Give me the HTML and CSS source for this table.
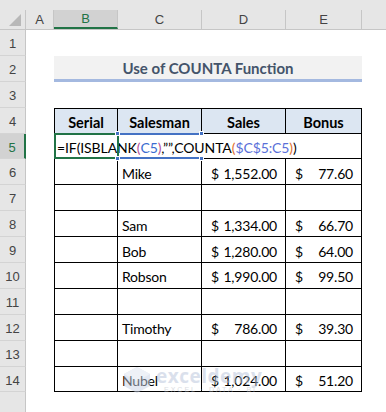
FILE: index.html
```html
<!DOCTYPE html>
<html lang="en">
<head>
    <meta charset="UTF-8">
    <meta name="viewport" content="width=device-width, initial-scale=1.0">
    <title>Use of COUNTA Function</title>
    <link rel="stylesheet" href="styles.css">
</head>
<body>
    <div class="sheet">
        <div class="row col-heads">
            <div class="corner"><span class="tri"></span></div>
            <div class="col-head"><span>A</span></div>
            <div class="col-head active"><span>B</span></div>
            <div class="col-head"><span>C</span></div>
            <div class="col-head"><span>D</span></div>
            <div class="col-head"><span>E</span></div>
            <div class="col-head last"><span></span></div>
        </div>

        <div class="row"><div class="row-head">1</div></div>
        <div class="row">
            <div class="row-head">2</div>
            <div></div>
            <div class="title">Use of COUNTA Function</div>
        </div>
        <div class="row"><div class="row-head">3</div></div>

        <div class="row">
            <div class="row-head">4</div>
            <div></div>
            <div class="cell th first top">Serial</div>
            <div class="cell th top">Salesman</div>
            <div class="cell th top">Sales</div>
            <div class="cell th top">Bonus</div>
        </div>

        <div class="row">
            <div class="row-head active">5</div>
            <div></div>
            <div class="cell first edit-cell">
                <div class="edit">=IF(ISBLANK<span class="p1">(</span><span class="ref">C5</span><span class="p1">)</span>,””,COUNTA<span class="p2">(</span><span class="ref2">$C$5:C5</span><span class="p2">)</span>)</div>
                <div class="active-box"></div>
            </div>
            <div class="cell range-cell">
                <span class="range"></span>
                <span class="knob tl"></span>
                <span class="knob tr"></span>
                <span class="knob bl"></span>
                <span class="knob br"></span>
            </div>
            <div class="cell"></div>
            <div class="cell"></div>
        </div>

        <div class="row">
            <div class="row-head">6</div>
            <div></div>
            <div class="cell first"></div>
            <div class="cell name">Mike</div>
            <div class="cell money"><span>$</span><span>1,552.00</span></div>
            <div class="cell money"><span>$</span><span>77.60</span></div>
        </div>
        <div class="row">
            <div class="row-head">7</div>
            <div></div>
            <div class="cell first"></div>
            <div class="cell"></div>
            <div class="cell"></div>
            <div class="cell"></div>
        </div>
        <div class="row">
            <div class="row-head">8</div>
            <div></div>
            <div class="cell first"></div>
            <div class="cell name">Sam</div>
            <div class="cell money"><span>$</span><span>1,334.00</span></div>
            <div class="cell money"><span>$</span><span>66.70</span></div>
        </div>
        <div class="row">
            <div class="row-head">9</div>
            <div></div>
            <div class="cell first"></div>
            <div class="cell name">Bob</div>
            <div class="cell money"><span>$</span><span>1,280.00</span></div>
            <div class="cell money"><span>$</span><span>64.00</span></div>
        </div>
        <div class="row">
            <div class="row-head">10</div>
            <div></div>
            <div class="cell first"></div>
            <div class="cell name">Robson</div>
            <div class="cell money"><span>$</span><span>1,990.00</span></div>
            <div class="cell money"><span>$</span><span>99.50</span></div>
        </div>
        <div class="row">
            <div class="row-head">11</div>
            <div></div>
            <div class="cell first"></div>
            <div class="cell"></div>
            <div class="cell"></div>
            <div class="cell"></div>
        </div>
        <div class="row">
            <div class="row-head">12</div>
            <div></div>
            <div class="cell first"></div>
            <div class="cell name">Timothy</div>
            <div class="cell money"><span>$</span><span>786.00</span></div>
            <div class="cell money"><span>$</span><span>39.30</span></div>
        </div>
        <div class="row">
            <div class="row-head">13</div>
            <div></div>
            <div class="cell first"></div>
            <div class="cell"></div>
            <div class="cell"></div>
            <div class="cell"></div>
        </div>
        <div class="row">
            <div class="row-head">14</div>
            <div></div>
            <div class="cell first"></div>
            <div class="cell name">Nubel</div>
            <div class="cell money"><span>$</span><span>1,024.00</span></div>
            <div class="cell money"><span>$</span><span>51.20</span></div>
        </div>
        <div class="row"><div class="row-head"></div></div>

        <div class="watermark">
            <svg class="wm-icon" width="30" height="28" viewBox="0 0 30 28">
                <path d="M15 1 L28 8 L28 20 L15 27 L2 20 L2 8 Z" fill="#c9d3e6"/>
                <path d="M15 1 L28 8 L15 15 L2 8 Z" fill="#dfe5f0"/>
            </svg>
            <div class="wm-text">
                <span class="wm-name">exceldemy</span>
                <span class="wm-sub">EXCEL · DATA · BI</span>
            </div>
        </div>
    </div>
</body>
</html>
```

FILE: styles.css
```css
* {
    box-sizing: border-box;
}
body {
    margin: 0;
    background-color: #ffffff;
    font-family: Lato, "Noto Sans", sans-serif;
    overflow: hidden;
}
.sheet {
    position: relative;
    width: 386px;
    height: 412px;
}
.row {
    display: grid;
    grid-template-columns: 26px 28px 64px 84px 84px 76px 1fr;
    height: 25.9px;
}
.col-heads {
    height: 30px;
    background-color: #e6e6e6;
    border-bottom: 1px solid #c6c6c6;
}
.corner {
    position: relative;
    border-right: 1px solid #c6c6c6;
    margin-top: 10px;
}
.corner .tri {
    position: absolute;
    right: 4px;
    bottom: 3px;
    width: 0;
    height: 0;
    border-left: 12px solid transparent;
    border-bottom: 12px solid #b8b8b8;
}
.col-head {
    margin-top: 10px;
    border-right: 1px solid #c6c6c6;
    display: flex;
    align-items: center;
    justify-content: center;
    font-family: "Liberation Sans", sans-serif;
    font-size: 13px;
    color: #444444;
}
.col-head.last {
    border-right: none;
}
.col-head.active {
    background-color: #d2d2d2;
    border-bottom: 2px solid #217346;
    color: #217346;
}
.row-head {
    background-color: #e6e6e6;
    border-right: 1px solid #c6c6c6;
    border-bottom: 1px solid #d4d4d4;
    display: flex;
    align-items: center;
    justify-content: center;
    font-family: "Liberation Sans", sans-serif;
    font-size: 13px;
    color: #444444;
    padding-top: 2px;
}
.row-head.active {
    background-color: #d2d2d2;
    border-right: 2px solid #217346;
    color: #217346;
}
.title {
    grid-column: span 4;
    background-color: #f2f2f2;
    border-bottom: 3px solid #a4b9e0;
    display: flex;
    align-items: center;
    justify-content: center;
    font-weight: bold;
    font-size: 15px;
    color: #44546a;
    padding-top: 1px;
}
.cell {
    border-right: 1px solid #000000;
    border-bottom: 1px solid #000000;
    font-size: 14px;
    letter-spacing: -0.2px;
    color: #000000;
    display: flex;
    align-items: center;
    padding-top: 3px;
    white-space: nowrap;
}
.cell.first {
    border-left: 1px solid #000000;
}
.cell.top {
    border-top: 1px solid #000000;
}
.th {
    background-color: #dce6f2;
    justify-content: center;
    font-weight: bold;
    font-size: 14.5px;
    letter-spacing: 0;
}
.name {
    padding-left: 4px;
}
.money {
    justify-content: space-between;
    padding-left: 9px;
    padding-right: 8px;
}
.edit-cell,
.range-cell {
    position: relative;
}
.edit {
    position: absolute;
    left: 0;
    top: 0;
    bottom: 0;
    width: 244px;
    background-color: #ffffff;
    display: flex;
    align-items: center;
    padding-left: 2px;
    padding-top: 3px;
    z-index: 1;
    font-size: 14px;
    letter-spacing: -0.1px;
}
.edit .ref {
    color: #3b6cd0;
}
.edit .ref2 {
    color: #5a6fd8;
}
.edit .p1 {
    color: #b4509c;
}
.edit .p2 {
    color: #e07030;
}
.active-box {
    position: absolute;
    left: -1px;
    top: -1px;
    right: -2px;
    bottom: -1px;
    border: 2px solid #217346;
    z-index: 2;
}
.range {
    position: absolute;
    left: 0;
    right: -1px;
    top: -1px;
    bottom: -1px;
    border-top: 2px solid #4472c4;
    border-bottom: 2px solid #4472c4;
    z-index: 3;
}
.knob {
    position: absolute;
    width: 5px;
    height: 5px;
    background-color: #4472c4;
    border: 1px solid #ffffff;
    z-index: 4;
}
.knob.tl { left: -3px; top: -3px; }
.knob.tr { right: -3px; top: -3px; }
.knob.bl { left: -3px; bottom: -3px; }
.knob.br { right: -3px; bottom: -3px; }
.watermark {
    position: absolute;
    left: 122px;
    top: 366px;
    display: flex;
    align-items: center;
    gap: 4px;
    opacity: 0.5;
    pointer-events: none;
}
.wm-text {
    display: flex;
    flex-direction: column;
    line-height: 1;
}
.wm-name {
    font-family: "Open Sans", sans-serif;
    font-weight: bold;
    font-size: 19px;
    color: #b7c3da;
    letter-spacing: 0.5px;
}
.wm-sub {
    font-family: "Liberation Sans", sans-serif;
    font-size: 7px;
    color: #b7bcc6;
    letter-spacing: 2px;
    margin-left: 8px;
}
```
